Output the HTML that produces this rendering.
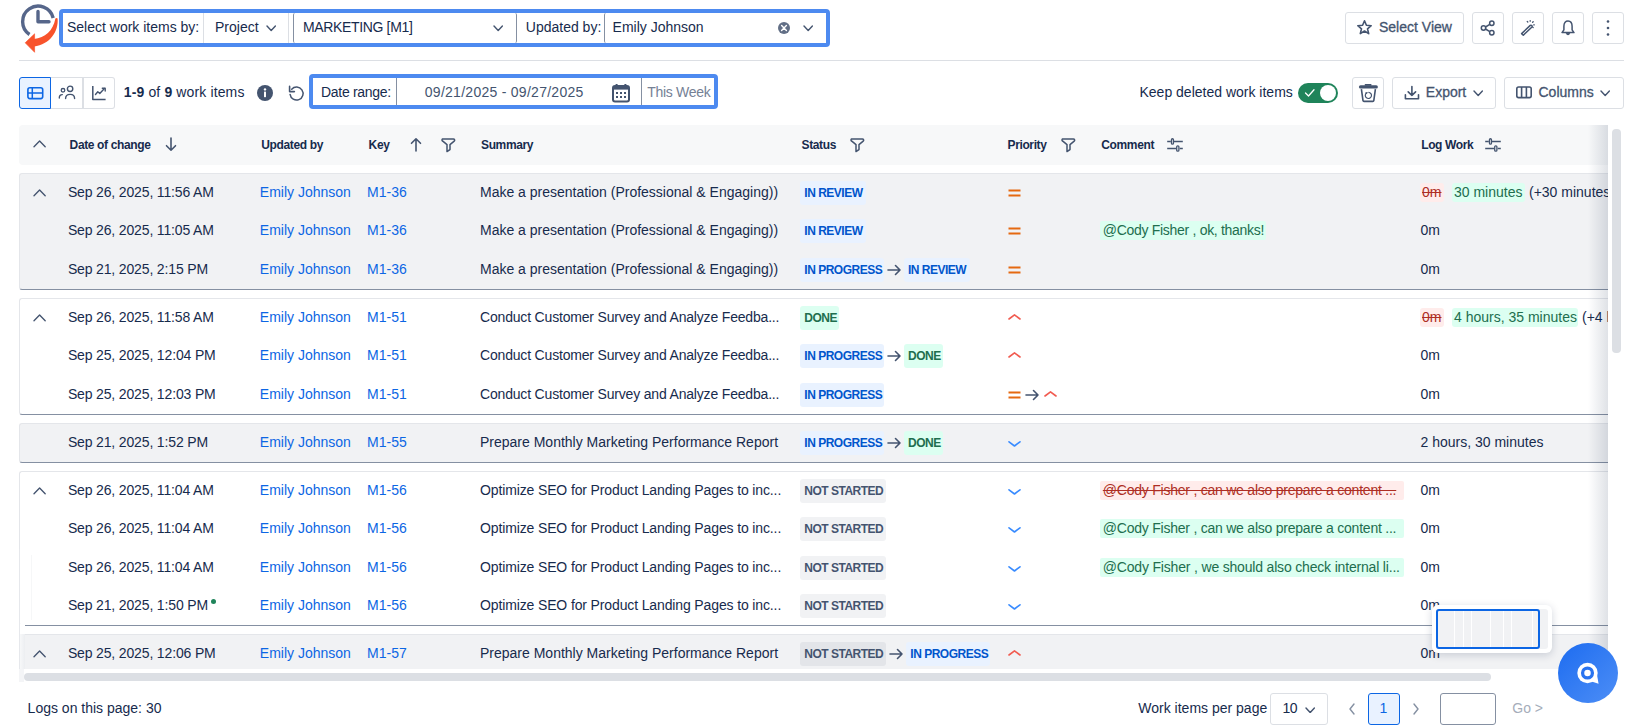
<!DOCTYPE html><html><head><meta charset="utf-8"><style>
html,body{margin:0;padding:0}
body{width:1630px;height:728px;overflow:hidden;background:#fff;font-family:"Liberation Sans",sans-serif;color:#172b4d;position:relative}
.a{position:absolute}
.t{position:absolute;white-space:nowrap}
.loz{position:absolute;height:24px;border-radius:3px;font-size:12px;font-weight:700;line-height:24px;letter-spacing:-0.5px;padding:0 4px;white-space:nowrap}
.lb{background:#e9f2ff;color:#0055cc}
.lg{background:#dcfff1;color:#216e4e}
.ln{background:rgba(9,30,66,0.06);color:#44546f}
</style></head><body>
<svg class="a" style="left:0px;top:0px" width="70" height="56" viewBox="0 0 70 56">
<path d="M29.5 34.5 A15.5 15.5 0 1 1 53.2 18" fill="none" stroke="#56668a" stroke-width="3.4"/>
<path d="M38 11.5 V21.8 H49" fill="none" stroke="#56668a" stroke-width="3.4" stroke-linecap="round" stroke-linejoin="round"/>
<path d="M55.4 18.6 Q56.4 17.6 57.6 18.4 C58.8 31 50 44.5 34 46.4 L34 39 C45 38.2 53 31 55.4 18.6 Z" fill="#f8532c"/>
<path d="M25.2 42.8 L34.6 33.8 L34.6 52.3 Z" fill="#f8532c" stroke="#f8532c" stroke-width="0.6" stroke-linejoin="round"/>
</svg>
<div class="a" style="left:59px;top:9px;width:763px;height:30px;border:4px solid #4d8af0;border-radius:4px;background:#fff"></div>
<div class="t" style="left:67.00px;top:19.15px;font-size:14px;line-height:16px;">Select work items by:</div>
<div class="a" style="left:203px;top:13px;width:84px;height:30px;border:1px solid #dcdfe4;border-top:none;border-bottom:none"></div>
<div class="t" style="left:215.00px;top:19.15px;font-size:14px;line-height:16px;">Project</div>
<svg class="a" style="left:266px;top:25px" width="10.4" height="6.6" viewBox="0 0 10.4 6.6"><path d="M1 1 L5.2 5.6 L9.4 1" fill="none" stroke="#44546f" stroke-width="1.4" stroke-linecap="round" stroke-linejoin="round"/></svg>
<div class="a" style="left:293px;top:13px;width:222px;height:30px;border-left:1.2px solid #8590a2;border-right:1.2px solid #8590a2;border-radius:2px"></div>
<div class="t" style="left:303.00px;top:19.15px;font-size:14px;line-height:16px;letter-spacing:-0.35px">MARKETING [M1]</div>
<svg class="a" style="left:492.5px;top:25px" width="10.4" height="6.6" viewBox="0 0 10.4 6.6"><path d="M1 1 L5.2 5.6 L9.4 1" fill="none" stroke="#44546f" stroke-width="1.4" stroke-linecap="round" stroke-linejoin="round"/></svg>
<div class="t" style="left:525.80px;top:19.15px;font-size:14px;line-height:16px;">Updated by:</div>
<div class="a" style="left:603.5px;top:13px;width:222px;height:30px;border-left:1.2px solid #8590a2;border-radius:2px"></div>
<div class="t" style="left:612.60px;top:19.15px;font-size:14px;line-height:16px;">Emily Johnson</div>
<svg class="a" style="left:777px;top:21px" width="14" height="14" viewBox="0 0 14 14"><circle cx="7" cy="7" r="6" fill="#626f86"/><path d="M4.6 4.6 L9.4 9.4 M9.4 4.6 L4.6 9.4" stroke="#fff" stroke-width="1.4" stroke-linecap="round"/></svg>
<svg class="a" style="left:802.5px;top:25px" width="10.4" height="6.6" viewBox="0 0 10.4 6.6"><path d="M1 1 L5.2 5.6 L9.4 1" fill="none" stroke="#44546f" stroke-width="1.4" stroke-linecap="round" stroke-linejoin="round"/></svg>
<div class="a" style="left:1345px;top:12px;width:117px;height:30px;border:1px solid #dcdfe4;border-radius:3px;background:#fff"></div>
<svg class="a" style="left:1356px;top:19px" width="17" height="17" viewBox="0 0 17 17"><path d="M8.5 1.8 L10.4 6.3 L15.2 6.7 L11.5 9.8 L12.7 14.6 L8.5 12 L4.3 14.6 L5.5 9.8 L1.8 6.7 L6.6 6.3 Z" fill="none" stroke="#44546f" stroke-width="1.6" stroke-linejoin="round"/></svg>
<div class="t" style="left:1379.00px;top:19.15px;font-size:14px;line-height:16px;color:#44546f;-webkit-text-stroke:0.3px #44546f">Select View</div>
<div class="a" style="left:1472px;top:12px;width:30px;height:30px;border:1px solid #dcdfe4;border-radius:3px;background:#fff"></div>
<svg class="a" style="left:1479px;top:19px" width="18" height="18" viewBox="0 0 18 18"><circle cx="4.5" cy="9" r="2.2" fill="none" stroke="#44546f" stroke-width="1.5"/><circle cx="12.8" cy="4.3" r="2.2" fill="none" stroke="#44546f" stroke-width="1.5"/><circle cx="12.8" cy="13.7" r="2.2" fill="none" stroke="#44546f" stroke-width="1.5"/><path d="M6.5 8 L10.8 5.4 M6.5 10 L10.8 12.6" stroke="#44546f" stroke-width="1.5"/></svg>
<div class="a" style="left:1512px;top:12px;width:30px;height:30px;border:1px solid #dcdfe4;border-radius:3px;background:#fff"></div>
<svg class="a" style="left:1519px;top:18px" width="18" height="18" viewBox="0 0 18 18"><path d="M2.6 15.6 L11.3 7.4 A1.2 1.2 0 0 1 13 9 L4.3 17.2 Z" fill="none" stroke="#44546f" stroke-width="1.5" stroke-linejoin="round"/><g stroke="#44546f" stroke-width="1.3" stroke-linecap="round"><path d="M11.2 2.6 V3.2"/><path d="M8.2 3.4 L8.8 4"/><path d="M14.2 3.7 L13.6 4.3"/><path d="M15.3 6.8 H14.7"/><path d="M14.2 9.6 L13.7 9.1"/></g></svg>
<div class="a" style="left:1552px;top:12px;width:30px;height:30px;border:1px solid #dcdfe4;border-radius:3px;background:#fff"></div>
<svg class="a" style="left:1559px;top:18px" width="18" height="18" viewBox="0 0 18 18"><path d="M3 14.6 L4.9 11.9 V8.2 C4.9 4.4 6.8 2.9 9 2.9 C11.2 2.9 13.1 4.4 13.1 8.2 V11.9 L15 14.6 Z" fill="none" stroke="#44546f" stroke-width="1.5" stroke-linejoin="round"/><path d="M7.3 15.4 A1.75 1.75 0 0 0 10.7 15.4 Z" fill="#44546f" stroke="#44546f" stroke-width="1"/></svg>
<div class="a" style="left:1592px;top:12px;width:30px;height:30px;border:1px solid #dcdfe4;border-radius:3px;background:#fff"></div>
<svg class="a" style="left:1601px;top:18px" width="14" height="18" viewBox="0 0 14 18"><circle cx="7" cy="3.5" r="1.3" fill="#44546f"/><circle cx="7" cy="10" r="1.3" fill="#44546f"/><circle cx="7" cy="16.5" r="1.3" fill="#44546f"/></svg>
<div class="a" style="left:19px;top:60px;width:1605px;height:1px;background:#dcdfe4"></div>
<div class="a" style="left:50px;top:77px;width:64px;height:30px;border:1px solid #dcdfe4;border-left:none;border-radius:0 3px 3px 0"></div>
<div class="a" style="left:82.3px;top:78px;width:1.5px;height:30px;background:#dcdfe4"></div>
<div class="a" style="left:19px;top:77px;width:30px;height:30px;border:1px solid #0c66e4;border-radius:3px 0 0 3px;background:#e9f2ff"></div>
<svg class="a" style="left:25px;top:85px" width="20" height="16" viewBox="0 0 20 16"><rect x="2.9" y="2.8" width="14.8" height="10.8" rx="2" fill="none" stroke="#0c66e4" stroke-width="1.6"/><path d="M2.9 8.1 H17.7 M7.3 2.8 V13.6" stroke="#0c66e4" stroke-width="1.5"/></svg>
<svg class="a" style="left:57px;top:84px" width="20" height="17" viewBox="0 0 20 17"><circle cx="6" cy="6.3" r="1.8" fill="none" stroke="#44546f" stroke-width="1.3"/><circle cx="13.1" cy="4.8" r="2.7" fill="none" stroke="#44546f" stroke-width="1.4"/><path d="M2.3 14 C2.3 11.8 3.5 10.6 5.3 10.6" fill="none" stroke="#44546f" stroke-width="1.4" stroke-linecap="round"/><path d="M8.6 14.5 C8.6 11.6 10.4 10.4 13.2 10.4 C16 10.4 17.6 11.6 17.6 14.5" fill="none" stroke="#44546f" stroke-width="1.4" stroke-linecap="round"/></svg>
<svg class="a" style="left:90px;top:84px" width="18" height="17" viewBox="0 0 18 17"><path d="M2.8 2 V15.6 H15.6" fill="none" stroke="#44546f" stroke-width="1.5" stroke-linejoin="round"/><path d="M5.5 10.5 L7.8 7.8 L9.8 9.5 L14.4 4.6" fill="none" stroke="#44546f" stroke-width="1.4" stroke-linecap="round" stroke-linejoin="round"/><path d="M12.3 4.2 H15.2 V7.1" fill="none" stroke="#44546f" stroke-width="1.4" stroke-linecap="round" stroke-linejoin="round"/></svg>
<div class="t" style="left:123.8px;top:84.15px;font-size:14px;line-height:16px;letter-spacing:0.13px"><b>1-9</b> of <b>9</b> work items</div>
<svg class="a" style="left:256px;top:84px" width="18" height="18" viewBox="0 0 18 18"><circle cx="9" cy="9" r="8" fill="#44546f"/><circle cx="9" cy="5.4" r="1.2" fill="#fff"/><rect x="8" y="7.6" width="2" height="5.6" rx="0.6" fill="#fff"/></svg>
<svg class="a" style="left:287.4px;top:84px" width="18" height="18" viewBox="0 0 18 18"><path d="M3.1 10.4 A6.5 6.5 0 1 0 4.7 5.2" fill="none" stroke="#44546f" stroke-width="1.5" stroke-linecap="round"/><path d="M2.6 2.4 V7.6 H7.4" fill="none" stroke="#44546f" stroke-width="1.6" stroke-linecap="round" stroke-linejoin="round"/></svg>
<div class="a" style="left:309px;top:74px;width:401px;height:27px;border:4px solid #4d8af0;border-radius:4px;background:#fff"></div>
<div class="t" style="left:321.00px;top:84.15px;font-size:14px;line-height:16px;letter-spacing:-0.3px">Date range:</div>
<div class="a" style="left:395.5px;top:78px;width:1px;height:27px;background:#8590a2"></div>
<div class="t" style="left:424.80px;top:84.15px;font-size:14px;line-height:16px;color:#44546f;letter-spacing:0.27px">09/21/2025 - 09/27/2025</div>
<svg class="a" style="left:611px;top:83px" width="20" height="20" viewBox="0 0 20 20"><rect x="2" y="3" width="16" height="15.5" rx="2" fill="none" stroke="#44546f" stroke-width="2"/><rect x="2" y="3" width="16" height="3.6" fill="#44546f"/><path d="M5.6 1 V4 M14.4 1 V4" stroke="#44546f" stroke-width="2"/><g fill="#44546f"><rect x="5" y="9" width="2" height="2"/><rect x="9" y="9" width="2" height="2"/><rect x="13" y="9" width="2" height="2"/><rect x="5" y="13" width="2" height="2"/><rect x="9" y="13" width="2" height="2"/><rect x="13" y="13" width="2" height="2"/></g></svg>
<div class="a" style="left:641px;top:78px;width:1px;height:27px;background:#8590a2"></div>
<div class="t" style="left:647.20px;top:84.15px;font-size:14px;line-height:16px;color:#758195;letter-spacing:-0.3px">This Week</div>
<div class="t" style="left:1139.50px;top:84.15px;font-size:14px;line-height:16px;">Keep deleted work items</div>
<div class="a" style="left:1298px;top:83px;width:40px;height:20px;background:#1f845a;border-radius:10px"></div>
<div class="a" style="left:1320px;top:85px;width:16px;height:16px;background:#fff;border-radius:50%"></div>
<svg class="a" style="left:1303.5px;top:88px" width="12" height="10" viewBox="0 0 12 10"><path d="M1.5 5 L4.5 8 L10 1.8" fill="none" stroke="#fff" stroke-width="1.3" stroke-linecap="round" stroke-linejoin="round"/></svg>
<div class="a" style="left:1352px;top:77px;width:30px;height:30px;border:1px solid #dcdfe4;border-radius:3px;background:#fff"></div>
<svg class="a" style="left:1358px;top:83px" width="20" height="20" viewBox="0 0 20 20"><path d="M2.6 3.9 H18.2" stroke="#44546f" stroke-width="3.4" stroke-linecap="round"/><path d="M7.4 1.9 H12.8" stroke="#44546f" stroke-width="1.6" stroke-linecap="round"/><path d="M3.4 6.2 L5 17.6 A1 1 0 0 0 6 18.4 H14.8 A1 1 0 0 0 15.8 17.6 L17.4 6.2" fill="none" stroke="#44546f" stroke-width="1.6" stroke-linejoin="round"/><path d="M8.7 9.8 A3.1 3.1 0 1 0 10.4 9.3" fill="none" stroke="#44546f" stroke-width="1.2"/><path d="M7.2 9.2 L8.7 11.3 L10 9.2 Z" fill="#44546f"/></svg>
<div class="a" style="left:1392px;top:77px;width:102px;height:30px;border:1px solid #dcdfe4;border-radius:3px;background:#fff"></div>
<svg class="a" style="left:1403px;top:85px" width="18" height="16" viewBox="0 0 18 16"><path d="M8.9 1.5 V10.4 M5.2 6.9 L8.9 10.4 L12.6 6.9" fill="none" stroke="#44546f" stroke-width="1.6" stroke-linecap="round" stroke-linejoin="round"/><path d="M2.4 9.8 V13.8 H15.5 V9.8" fill="none" stroke="#44546f" stroke-width="1.6" stroke-linecap="round" stroke-linejoin="round"/></svg>
<div class="t" style="left:1425.80px;top:84.15px;font-size:14px;line-height:16px;color:#44546f;-webkit-text-stroke:0.3px #44546f">Export</div>
<svg class="a" style="left:1473px;top:90px" width="10.4" height="6.6" viewBox="0 0 10.4 6.6"><path d="M1 1 L5.2 5.6 L9.4 1" fill="none" stroke="#44546f" stroke-width="1.4" stroke-linecap="round" stroke-linejoin="round"/></svg>
<div class="a" style="left:1504px;top:77px;width:118px;height:30px;border:1px solid #dcdfe4;border-radius:3px;background:#fff"></div>
<svg class="a" style="left:1515px;top:85px" width="18" height="16" viewBox="0 0 18 16"><rect x="1.8" y="2" width="14.4" height="10.6" rx="1.8" fill="none" stroke="#44546f" stroke-width="1.6"/><path d="M6.6 2 V12.6 M11.4 2 V12.6" stroke="#44546f" stroke-width="1.6"/></svg>
<div class="t" style="left:1538.50px;top:84.15px;font-size:14px;line-height:16px;color:#44546f;-webkit-text-stroke:0.3px #44546f">Columns</div>
<svg class="a" style="left:1600px;top:90px" width="10.4" height="6.6" viewBox="0 0 10.4 6.6"><path d="M1 1 L5.2 5.6 L9.4 1" fill="none" stroke="#44546f" stroke-width="1.4" stroke-linecap="round" stroke-linejoin="round"/></svg>
<div class="a" style="left:19px;top:125px;width:1589px;height:544px;overflow:hidden">
<div class="a" style="left:0px;top:0px;width:1600px;height:40px;background:#f7f8f9;border-radius:4px 0 0 4px"></div>
<svg class="a" style="left:14.399999999999999px;top:15.400000000000006px" width="13.2" height="7.8" viewBox="0 0 13.2 7.8"><path d="M1 6.8 L6.6 1 L12.2 6.8" fill="none" stroke="#44546f" stroke-width="1.35" stroke-linecap="round" stroke-linejoin="round"/></svg>
<div class="t" style="left:50.60px;top:13.14px;font-size:12px;line-height:14px;font-weight:700;letter-spacing:-0.37px">Date of change</div>
<svg class="a" style="left:146px;top:12.300000000000011px" width="12" height="15" viewBox="0 0 12 15"><path d="M6 1 V13.2 M1.5 8.7 L6 13.2 L10.5 8.7" fill="none" stroke="#44546f" stroke-width="1.6" stroke-linecap="round" stroke-linejoin="round"/></svg>
<div class="t" style="left:242.30px;top:13.14px;font-size:12px;line-height:14px;font-weight:700;letter-spacing:-0.37px">Updated by</div>
<div class="t" style="left:349.60px;top:13.14px;font-size:12px;line-height:14px;font-weight:700;letter-spacing:-0.37px">Key</div>
<svg class="a" style="left:391px;top:12.300000000000011px" width="12" height="15" viewBox="0 0 12 15"><path d="M6 14 V1.8 M1.5 6.3 L6 1.8 L10.5 6.3" fill="none" stroke="#44546f" stroke-width="1.6" stroke-linecap="round" stroke-linejoin="round"/></svg>
<svg class="a" style="left:421.0px;top:12.0px" width="16" height="16" viewBox="0 0 16 16"><path d="M2.6 1.9 H13.4 A1.3 1.3 0 0 1 14.2 4.2 L10 7.6 V12.6 L7 14.5 V7.6 L2.8 4.2 A1.3 1.3 0 0 1 2.6 1.9 Z" fill="none" stroke="#44546f" stroke-width="1.5" stroke-linejoin="round"/></svg>
<div class="t" style="left:462.00px;top:13.14px;font-size:12px;line-height:14px;font-weight:700;letter-spacing:-0.37px">Summary</div>
<div class="t" style="left:782.50px;top:13.14px;font-size:12px;line-height:14px;font-weight:700;letter-spacing:-0.37px">Status</div>
<svg class="a" style="left:830.0px;top:12.0px" width="16" height="16" viewBox="0 0 16 16"><path d="M2.6 1.9 H13.4 A1.3 1.3 0 0 1 14.2 4.2 L10 7.6 V12.6 L7 14.5 V7.6 L2.8 4.2 A1.3 1.3 0 0 1 2.6 1.9 Z" fill="none" stroke="#44546f" stroke-width="1.5" stroke-linejoin="round"/></svg>
<div class="t" style="left:988.50px;top:13.14px;font-size:12px;line-height:14px;font-weight:700;letter-spacing:-0.37px">Priority</div>
<svg class="a" style="left:1041.0px;top:12.0px" width="16" height="16" viewBox="0 0 16 16"><path d="M2.6 1.9 H13.4 A1.3 1.3 0 0 1 14.2 4.2 L10 7.6 V12.6 L7 14.5 V7.6 L2.8 4.2 A1.3 1.3 0 0 1 2.6 1.9 Z" fill="none" stroke="#44546f" stroke-width="1.5" stroke-linejoin="round"/></svg>
<div class="t" style="left:1082.30px;top:13.14px;font-size:12px;line-height:14px;font-weight:700;letter-spacing:-0.37px">Comment</div>
<svg class="a" style="left:1148px;top:12px" width="17" height="16" viewBox="0 0 17 16"><path d="M0.2 4.5 H3.8 M7 4.5 H15.8 M0.2 11.4 H9 M12.7 11.4 H15.8" stroke="#44546f" stroke-width="1.5"/><rect x="4.45" y="1.75" width="2" height="5.4" rx="1" fill="none" stroke="#44546f" stroke-width="1.3"/><rect x="9.7" y="8.8" width="2.2" height="5.4" rx="1" fill="none" stroke="#44546f" stroke-width="1.3"/></svg>
<div class="t" style="left:1402.20px;top:13.14px;font-size:12px;line-height:14px;font-weight:700;letter-spacing:-0.37px">Log Work</div>
<svg class="a" style="left:1466px;top:12px" width="17" height="16" viewBox="0 0 17 16"><path d="M0.2 4.5 H3.8 M7 4.5 H15.8 M0.2 11.4 H9 M12.7 11.4 H15.8" stroke="#44546f" stroke-width="1.5"/><rect x="4.45" y="1.75" width="2" height="5.4" rx="1" fill="none" stroke="#44546f" stroke-width="1.3"/><rect x="9.7" y="8.8" width="2.2" height="5.4" rx="1" fill="none" stroke="#44546f" stroke-width="1.3"/></svg>
<div class="a" style="left:0px;top:48px;width:1600px;height:115px;background:#f1f2f4;border-top:1px solid #e4e6ea;border-left:1px solid #e4e6ea;border-radius:3px 0 0 3px;border-bottom:1px solid #8590a2"></div>
<svg class="a" style="left:14.399999999999999px;top:64.1px" width="13.2" height="7.8" viewBox="0 0 13.2 7.8"><path d="M1 6.8 L6.6 1 L12.2 6.8" fill="none" stroke="#44546f" stroke-width="1.35" stroke-linecap="round" stroke-linejoin="round"/></svg>
<div class="t" style="left:48.90px;top:59.15px;font-size:14px;line-height:16px;letter-spacing:-0.15px">Sep 26, 2025, 11:56 AM</div>
<div class="t" style="left:240.80px;top:59.15px;font-size:14px;line-height:16px;color:#0c66e4;">Emily Johnson</div>
<div class="t" style="left:348.10px;top:59.15px;font-size:14px;line-height:16px;color:#0c66e4;">M1-36</div>
<div class="t" style="left:461.00px;top:59.15px;font-size:14px;line-height:16px;">Make a presentation (Professional &amp; Engaging))</div>
<div class="loz lb" style="left:781.30px;top:56.00px;width:57.5px;text-align:center">IN REVIEW</div>
<svg class="a" style="left:988.5px;top:64.0px" width="13" height="8" viewBox="0 0 13 8"><path d="M0.5 1.5 H12.5 M0.5 6.5 H12.5" stroke="#e56910" stroke-width="1.8"/></svg>
<div class="a" style="left:1401px;top:58.0px;width:24px;height:19px;background:#ffeceb;border-radius:3px"></div>
<div class="t" style="left:1403.00px;top:59.15px;font-size:14px;line-height:16px;color:#ae2e24;text-decoration:line-through">0m</div>
<div class="a" style="left:1433px;top:58.0px;width:73px;height:19px;background:#dcfff1;border-radius:3px"></div>
<div class="t" style="left:1435.00px;top:59.15px;font-size:14px;line-height:16px;color:#216e4e;">30 minutes</div>
<div class="t" style="left:1510.00px;top:59.15px;font-size:14px;line-height:16px;">(+30 minutes)</div>
<div class="t" style="left:48.90px;top:97.48px;font-size:14px;line-height:16px;letter-spacing:-0.15px">Sep 26, 2025, 11:05 AM</div>
<div class="t" style="left:240.80px;top:97.48px;font-size:14px;line-height:16px;color:#0c66e4;">Emily Johnson</div>
<div class="t" style="left:348.10px;top:97.48px;font-size:14px;line-height:16px;color:#0c66e4;">M1-36</div>
<div class="t" style="left:461.00px;top:97.48px;font-size:14px;line-height:16px;">Make a presentation (Professional &amp; Engaging))</div>
<div class="loz lb" style="left:781.30px;top:94.33px;width:57.5px;text-align:center">IN REVIEW</div>
<svg class="a" style="left:988.5px;top:102.33333333333334px" width="13" height="8" viewBox="0 0 13 8"><path d="M0.5 1.5 H12.5 M0.5 6.5 H12.5" stroke="#e56910" stroke-width="1.8"/></svg>
<div class="a" style="left:1081.3px;top:96.33333333333334px;width:165.5px;height:19px;background:#dcfff1;border-radius:2px"></div>
<div class="t" style="left:1083.80px;top:97.48px;font-size:14px;line-height:16px;color:#216e4e;letter-spacing:-0.3px">@Cody Fisher , ok, thanks!</div>
<div class="t" style="left:1401.50px;top:97.48px;font-size:14px;line-height:16px;">0m</div>
<div class="t" style="left:48.90px;top:135.82px;font-size:14px;line-height:16px;letter-spacing:-0.15px">Sep 21, 2025, 2:15 PM</div>
<div class="t" style="left:240.80px;top:135.82px;font-size:14px;line-height:16px;color:#0c66e4;">Emily Johnson</div>
<div class="t" style="left:348.10px;top:135.82px;font-size:14px;line-height:16px;color:#0c66e4;">M1-36</div>
<div class="t" style="left:461.00px;top:135.82px;font-size:14px;line-height:16px;">Make a presentation (Professional &amp; Engaging))</div>
<div class="loz lb" style="left:781.30px;top:132.67px;width:75.7px;text-align:center">IN PROGRESS</div>
<svg class="a" style="left:868.0px;top:138.66666666666669px" width="15" height="12" viewBox="0 0 15 12"><path d="M1 6 H13 M8.5 1.5 L13 6 L8.5 10.5" fill="none" stroke="#44546f" stroke-width="1.6" stroke-linecap="round" stroke-linejoin="round"/></svg>
<div class="loz lb" style="left:885.00px;top:132.67px;width:57.5px;text-align:center">IN REVIEW</div>
<svg class="a" style="left:988.5px;top:140.66666666666669px" width="13" height="8" viewBox="0 0 13 8"><path d="M0.5 1.5 H12.5 M0.5 6.5 H12.5" stroke="#e56910" stroke-width="1.8"/></svg>
<div class="t" style="left:1401.50px;top:135.82px;font-size:14px;line-height:16px;">0m</div>
<div class="a" style="left:0px;top:173px;width:1600px;height:115px;background:#fff;border-top:1px solid #e4e6ea;border-left:1px solid #e4e6ea;border-radius:3px 0 0 3px;border-bottom:1px solid #8590a2"></div>
<svg class="a" style="left:14.399999999999999px;top:189.10000000000002px" width="13.2" height="7.8" viewBox="0 0 13.2 7.8"><path d="M1 6.8 L6.6 1 L12.2 6.8" fill="none" stroke="#44546f" stroke-width="1.35" stroke-linecap="round" stroke-linejoin="round"/></svg>
<div class="t" style="left:48.90px;top:184.15px;font-size:14px;line-height:16px;letter-spacing:-0.15px">Sep 26, 2025, 11:58 AM</div>
<div class="t" style="left:240.80px;top:184.15px;font-size:14px;line-height:16px;color:#0c66e4;">Emily Johnson</div>
<div class="t" style="left:348.10px;top:184.15px;font-size:14px;line-height:16px;color:#0c66e4;">M1-51</div>
<div class="t" style="left:461.00px;top:184.15px;font-size:14px;line-height:16px;letter-spacing:-0.18px">Conduct Customer Survey and Analyze Feedba...</div>
<div class="loz lg" style="left:781.30px;top:181.00px;width:31px;text-align:center">DONE</div>
<svg class="a" style="left:988.5px;top:188.0px" width="13" height="8" viewBox="0 0 13 8"><path d="M1 6 L6.5 1.8 L12 6" fill="none" stroke="#f15b50" stroke-width="1.6" stroke-linecap="round" stroke-linejoin="round"/></svg>
<div class="a" style="left:1401px;top:183.0px;width:24px;height:19px;background:#ffeceb;border-radius:3px"></div>
<div class="t" style="left:1403.00px;top:184.15px;font-size:14px;line-height:16px;color:#ae2e24;text-decoration:line-through">0m</div>
<div class="a" style="left:1433px;top:183.0px;width:126px;height:19px;background:#dcfff1;border-radius:3px"></div>
<div class="t" style="left:1435.00px;top:184.15px;font-size:14px;line-height:16px;color:#216e4e;">4 hours, 35 minutes</div>
<div class="t" style="left:1563.00px;top:184.15px;font-size:14px;line-height:16px;">(+4 hours, 35 minutes)</div>
<div class="t" style="left:48.90px;top:222.48px;font-size:14px;line-height:16px;letter-spacing:-0.15px">Sep 25, 2025, 12:04 PM</div>
<div class="t" style="left:240.80px;top:222.48px;font-size:14px;line-height:16px;color:#0c66e4;">Emily Johnson</div>
<div class="t" style="left:348.10px;top:222.48px;font-size:14px;line-height:16px;color:#0c66e4;">M1-51</div>
<div class="t" style="left:461.00px;top:222.48px;font-size:14px;line-height:16px;letter-spacing:-0.18px">Conduct Customer Survey and Analyze Feedba...</div>
<div class="loz lb" style="left:781.30px;top:219.33px;width:75.7px;text-align:center">IN PROGRESS</div>
<svg class="a" style="left:868.0px;top:225.33333333333331px" width="15" height="12" viewBox="0 0 15 12"><path d="M1 6 H13 M8.5 1.5 L13 6 L8.5 10.5" fill="none" stroke="#44546f" stroke-width="1.6" stroke-linecap="round" stroke-linejoin="round"/></svg>
<div class="loz lg" style="left:885.00px;top:219.33px;width:31px;text-align:center">DONE</div>
<svg class="a" style="left:988.5px;top:226.33333333333331px" width="13" height="8" viewBox="0 0 13 8"><path d="M1 6 L6.5 1.8 L12 6" fill="none" stroke="#f15b50" stroke-width="1.6" stroke-linecap="round" stroke-linejoin="round"/></svg>
<div class="t" style="left:1401.50px;top:222.48px;font-size:14px;line-height:16px;">0m</div>
<div class="t" style="left:48.90px;top:260.82px;font-size:14px;line-height:16px;letter-spacing:-0.15px">Sep 25, 2025, 12:03 PM</div>
<div class="t" style="left:240.80px;top:260.82px;font-size:14px;line-height:16px;color:#0c66e4;">Emily Johnson</div>
<div class="t" style="left:348.10px;top:260.82px;font-size:14px;line-height:16px;color:#0c66e4;">M1-51</div>
<div class="t" style="left:461.00px;top:260.82px;font-size:14px;line-height:16px;letter-spacing:-0.18px">Conduct Customer Survey and Analyze Feedba...</div>
<div class="loz lb" style="left:781.30px;top:257.67px;width:75.7px;text-align:center">IN PROGRESS</div>
<svg class="a" style="left:988.5px;top:265.6666666666667px" width="13" height="8" viewBox="0 0 13 8"><path d="M0.5 1.5 H12.5 M0.5 6.5 H12.5" stroke="#e56910" stroke-width="1.8"/></svg>
<svg class="a" style="left:1005.5px;top:263.6666666666667px" width="15" height="12" viewBox="0 0 15 12"><path d="M1 6 H13 M8.5 1.5 L13 6 L8.5 10.5" fill="none" stroke="#44546f" stroke-width="1.6" stroke-linecap="round" stroke-linejoin="round"/></svg>
<svg class="a" style="left:1024.5px;top:264.6666666666667px" width="13" height="8" viewBox="0 0 13 8"><path d="M1 6 L6.5 1.8 L12 6" fill="none" stroke="#f15b50" stroke-width="1.6" stroke-linecap="round" stroke-linejoin="round"/></svg>
<div class="t" style="left:1401.50px;top:260.82px;font-size:14px;line-height:16px;">0m</div>
<div class="a" style="left:0px;top:298px;width:1600px;height:38px;background:#f1f2f4;border-top:1px solid #e4e6ea;border-left:1px solid #e4e6ea;border-radius:3px 0 0 3px;border-bottom:1px solid #8590a2"></div>
<div class="t" style="left:48.90px;top:309.15px;font-size:14px;line-height:16px;letter-spacing:-0.15px">Sep 21, 2025, 1:52 PM</div>
<div class="t" style="left:240.80px;top:309.15px;font-size:14px;line-height:16px;color:#0c66e4;">Emily Johnson</div>
<div class="t" style="left:348.10px;top:309.15px;font-size:14px;line-height:16px;color:#0c66e4;">M1-55</div>
<div class="t" style="left:461.00px;top:309.15px;font-size:14px;line-height:16px;">Prepare Monthly Marketing Performance Report</div>
<div class="loz lb" style="left:781.30px;top:306.00px;width:75.7px;text-align:center">IN PROGRESS</div>
<svg class="a" style="left:868.0px;top:312px" width="15" height="12" viewBox="0 0 15 12"><path d="M1 6 H13 M8.5 1.5 L13 6 L8.5 10.5" fill="none" stroke="#44546f" stroke-width="1.6" stroke-linecap="round" stroke-linejoin="round"/></svg>
<div class="loz lg" style="left:885.00px;top:306.00px;width:31px;text-align:center">DONE</div>
<svg class="a" style="left:988.5px;top:315px" width="13" height="8" viewBox="0 0 13 8"><path d="M1 1.8 L6.5 6 L12 1.8" fill="none" stroke="#388bff" stroke-width="1.6" stroke-linecap="round" stroke-linejoin="round"/></svg>
<div class="t" style="left:1401.50px;top:309.15px;font-size:14px;line-height:16px;">2 hours, 30 minutes</div>
<div class="a" style="left:0px;top:346px;width:1600px;height:153px;background:#fff;border-top:1px solid #e4e6ea;border-left:1px solid #e4e6ea;border-radius:3px 0 0 3px;border-bottom:1px solid #8590a2"></div>
<svg class="a" style="left:14.399999999999999px;top:362.1px" width="13.2" height="7.8" viewBox="0 0 13.2 7.8"><path d="M1 6.8 L6.6 1 L12.2 6.8" fill="none" stroke="#44546f" stroke-width="1.35" stroke-linecap="round" stroke-linejoin="round"/></svg>
<div class="t" style="left:48.90px;top:357.15px;font-size:14px;line-height:16px;letter-spacing:-0.15px">Sep 26, 2025, 11:04 AM</div>
<div class="t" style="left:240.80px;top:357.15px;font-size:14px;line-height:16px;color:#0c66e4;">Emily Johnson</div>
<div class="t" style="left:348.10px;top:357.15px;font-size:14px;line-height:16px;color:#0c66e4;">M1-56</div>
<div class="t" style="left:461.00px;top:357.15px;font-size:14px;line-height:16px;letter-spacing:-0.13px">Optimize SEO for Product Landing Pages to inc...</div>
<div class="loz ln" style="left:781.30px;top:354.00px;width:78px;text-align:center">NOT STARTED</div>
<svg class="a" style="left:988.5px;top:363.0px" width="13" height="8" viewBox="0 0 13 8"><path d="M1 1.8 L6.5 6 L12 1.8" fill="none" stroke="#388bff" stroke-width="1.6" stroke-linecap="round" stroke-linejoin="round"/></svg>
<div class="a" style="left:1081.3px;top:356.0px;width:303.7px;height:19px;background:#ffeceb;border-radius:2px"></div>
<div class="t" style="left:1083.80px;top:357.15px;font-size:14px;line-height:16px;color:#ae2e24;text-decoration:line-through;letter-spacing:-0.23px">@Cody Fisher , can we also prepare a content ...</div>
<div class="t" style="left:1401.50px;top:357.15px;font-size:14px;line-height:16px;">0m</div>
<div class="t" style="left:48.90px;top:395.40px;font-size:14px;line-height:16px;letter-spacing:-0.15px">Sep 26, 2025, 11:04 AM</div>
<div class="t" style="left:240.80px;top:395.40px;font-size:14px;line-height:16px;color:#0c66e4;">Emily Johnson</div>
<div class="t" style="left:348.10px;top:395.40px;font-size:14px;line-height:16px;color:#0c66e4;">M1-56</div>
<div class="t" style="left:461.00px;top:395.40px;font-size:14px;line-height:16px;letter-spacing:-0.13px">Optimize SEO for Product Landing Pages to inc...</div>
<div class="loz ln" style="left:781.30px;top:392.25px;width:78px;text-align:center">NOT STARTED</div>
<svg class="a" style="left:988.5px;top:401.25px" width="13" height="8" viewBox="0 0 13 8"><path d="M1 1.8 L6.5 6 L12 1.8" fill="none" stroke="#388bff" stroke-width="1.6" stroke-linecap="round" stroke-linejoin="round"/></svg>
<div class="a" style="left:1081.3px;top:394.25px;width:303.7px;height:19px;background:#dcfff1;border-radius:2px"></div>
<div class="t" style="left:1083.80px;top:395.40px;font-size:14px;line-height:16px;color:#216e4e;letter-spacing:-0.23px">@Cody Fisher , can we also prepare a content ...</div>
<div class="t" style="left:1401.50px;top:395.40px;font-size:14px;line-height:16px;">0m</div>
<div class="t" style="left:48.90px;top:433.65px;font-size:14px;line-height:16px;letter-spacing:-0.15px">Sep 26, 2025, 11:04 AM</div>
<div class="t" style="left:240.80px;top:433.65px;font-size:14px;line-height:16px;color:#0c66e4;">Emily Johnson</div>
<div class="t" style="left:348.10px;top:433.65px;font-size:14px;line-height:16px;color:#0c66e4;">M1-56</div>
<div class="t" style="left:461.00px;top:433.65px;font-size:14px;line-height:16px;letter-spacing:-0.13px">Optimize SEO for Product Landing Pages to inc...</div>
<div class="loz ln" style="left:781.30px;top:430.50px;width:78px;text-align:center">NOT STARTED</div>
<svg class="a" style="left:988.5px;top:439.5px" width="13" height="8" viewBox="0 0 13 8"><path d="M1 1.8 L6.5 6 L12 1.8" fill="none" stroke="#388bff" stroke-width="1.6" stroke-linecap="round" stroke-linejoin="round"/></svg>
<div class="a" style="left:1081.3px;top:432.5px;width:303.7px;height:19px;background:#dcfff1;border-radius:2px"></div>
<div class="t" style="left:1083.80px;top:433.65px;font-size:14px;line-height:16px;color:#216e4e;letter-spacing:-0.18px">@Cody Fisher , we should also check internal li...</div>
<div class="t" style="left:1401.50px;top:433.65px;font-size:14px;line-height:16px;">0m</div>
<div class="t" style="left:48.90px;top:471.90px;font-size:14px;line-height:16px;letter-spacing:-0.15px">Sep 21, 2025, 1:50 PM</div>
<div class="a" style="left:191.5px;top:473.5px;width:5px;height:5px;background:#1f845a;border-radius:50%"></div>
<div class="t" style="left:240.80px;top:471.90px;font-size:14px;line-height:16px;color:#0c66e4;">Emily Johnson</div>
<div class="t" style="left:348.10px;top:471.90px;font-size:14px;line-height:16px;color:#0c66e4;">M1-56</div>
<div class="t" style="left:461.00px;top:471.90px;font-size:14px;line-height:16px;letter-spacing:-0.13px">Optimize SEO for Product Landing Pages to inc...</div>
<div class="loz ln" style="left:781.30px;top:468.75px;width:78px;text-align:center">NOT STARTED</div>
<svg class="a" style="left:988.5px;top:477.75px" width="13" height="8" viewBox="0 0 13 8"><path d="M1 1.8 L6.5 6 L12 1.8" fill="none" stroke="#388bff" stroke-width="1.6" stroke-linecap="round" stroke-linejoin="round"/></svg>
<div class="t" style="left:1401.50px;top:471.90px;font-size:14px;line-height:16px;">0m</div>
<div class="a" style="left:0px;top:509px;width:1600px;height:38px;background:#f1f2f4;border-top:1px solid #e4e6ea;border-left:1px solid #e4e6ea;border-radius:3px 0 0 3px;border-bottom:1px solid #8590a2"></div>
<svg class="a" style="left:14.399999999999999px;top:525.1px" width="13.2" height="7.8" viewBox="0 0 13.2 7.8"><path d="M1 6.8 L6.6 1 L12.2 6.8" fill="none" stroke="#44546f" stroke-width="1.35" stroke-linecap="round" stroke-linejoin="round"/></svg>
<div class="t" style="left:48.90px;top:520.15px;font-size:14px;line-height:16px;letter-spacing:-0.15px">Sep 25, 2025, 12:06 PM</div>
<div class="t" style="left:240.80px;top:520.15px;font-size:14px;line-height:16px;color:#0c66e4;">Emily Johnson</div>
<div class="t" style="left:348.10px;top:520.15px;font-size:14px;line-height:16px;color:#0c66e4;">M1-57</div>
<div class="t" style="left:461.00px;top:520.15px;font-size:14px;line-height:16px;">Prepare Monthly Marketing Performance Report</div>
<div class="loz ln" style="left:781.30px;top:517.00px;width:78px;text-align:center">NOT STARTED</div>
<svg class="a" style="left:870.3px;top:523px" width="15" height="12" viewBox="0 0 15 12"><path d="M1 6 H13 M8.5 1.5 L13 6 L8.5 10.5" fill="none" stroke="#44546f" stroke-width="1.6" stroke-linecap="round" stroke-linejoin="round"/></svg>
<div class="loz lb" style="left:887.30px;top:517.00px;width:75.7px;text-align:center">IN PROGRESS</div>
<svg class="a" style="left:988.5px;top:524px" width="13" height="8" viewBox="0 0 13 8"><path d="M1 6 L6.5 1.8 L12 6" fill="none" stroke="#f15b50" stroke-width="1.6" stroke-linecap="round" stroke-linejoin="round"/></svg>
<div class="t" style="left:1401.50px;top:520.15px;font-size:14px;line-height:16px;">0m</div>
<div class="a" style="left:0px;top:424px;width:1px;height:120px;background:#e6e8ec"></div>
<div class="a" style="left:11.5px;top:430px;width:1px;height:65px;background:#f6f7f8"></div>
<div class="a" style="left:0.5px;top:499px;width:5.5px;height:2px;background:#fff"></div>
<div class="a" style="left:1px;top:509px;width:5px;height:35px;background:linear-gradient(to right,#f7f8f9,#eceef1)"></div>
<div class="a" style="left:1569px;top:0px;width:20px;height:544px;background:linear-gradient(to right, rgba(9,30,66,0), rgba(9,30,66,0.13))"></div>
</div>
<div class="a" style="left:1612px;top:128.5px;width:8.5px;height:224px;background:#dcdfe4;border-radius:4px"></div>
<div class="a" style="left:19px;top:669px;width:5px;height:13px;background:#f4f5f7"></div>
<div class="a" style="left:23.5px;top:673px;width:1467.5px;height:8px;background:#dcdfe4;border-radius:4px"></div>
<div class="t" style="left:27.60px;top:699.65px;font-size:14px;line-height:16px;">Logs on this page: 30</div>
<div class="t" style="left:1138.30px;top:699.65px;font-size:14px;line-height:16px;">Work items per page</div>
<div class="a" style="left:1270px;top:693px;width:56px;height:30px;border:1px solid #dcdfe4;border-radius:3px;background:#fff"></div>
<div class="t" style="left:1282.40px;top:699.65px;font-size:14px;line-height:16px;letter-spacing:-0.5px">10</div>
<svg class="a" style="left:1304.5px;top:706.5px" width="10.4" height="6.6" viewBox="0 0 10.4 6.6"><path d="M1 1 L5.2 5.6 L9.4 1" fill="none" stroke="#44546f" stroke-width="1.4" stroke-linecap="round" stroke-linejoin="round"/></svg>
<svg class="a" style="left:1347px;top:702px" width="10" height="14" viewBox="0 0 10 14"><path d="M7 2 L3 7 L7 12" fill="none" stroke="#8590a2" stroke-width="1.4" stroke-linecap="round" stroke-linejoin="round"/></svg>
<div class="a" style="left:1368px;top:693px;width:30px;height:30px;border:1px solid #0c66e4;border-radius:3px;background:#e9f2ff"></div>
<div class="t" style="left:1379.50px;top:699.65px;font-size:14px;line-height:16px;color:#0c66e4;">1</div>
<svg class="a" style="left:1411px;top:702px" width="10" height="14" viewBox="0 0 10 14"><path d="M3 2 L7 7 L3 12" fill="none" stroke="#8590a2" stroke-width="1.4" stroke-linecap="round" stroke-linejoin="round"/></svg>
<div class="a" style="left:1440px;top:693px;width:54px;height:30px;border:1px solid #8590a2;border-radius:3px;background:#fff"></div>
<div class="t" style="left:1512.30px;top:699.65px;font-size:14px;line-height:16px;color:#a5adba;">Go &gt;</div>
<div class="a" style="left:1432px;top:605px;width:119.5px;height:47.5px;background:#fff;border-radius:6px;box-shadow:0 2px 8px rgba(9,30,66,0.18)"></div>
<div class="a" style="left:1436px;top:609px;width:112px;height:39.5px;background:#f1f2f4;border-radius:3px"></div>
<div class="a" style="left:1436px;top:609px;width:99.5px;height:35.5px;border:2px solid #0c66e4;border-radius:3px;background:#f1f2f4;overflow:hidden"><div class="a" style="left:16px;top:0;width:1px;height:39.5px;background:#fff"></div><div class="a" style="left:24.5px;top:0;width:1px;height:39.5px;background:#fff"></div><div class="a" style="left:32.5px;top:0;width:1px;height:39.5px;background:#fff"></div><div class="a" style="left:51.5px;top:0;width:1px;height:39.5px;background:#fff"></div><div class="a" style="left:65px;top:0;width:1px;height:39.5px;background:#fff"></div><div class="a" style="left:73px;top:0;width:1px;height:39.5px;background:#fff"></div><div class="a" style="left:93.5px;top:0;width:1px;height:39.5px;background:#fff"></div></div>
<div class="a" style="left:1558px;top:643px;width:60px;height:60px;border-radius:50%;background:linear-gradient(135deg,#1d6cf0,#4d8ef6)"></div>
<svg class="a" style="left:1574px;top:659px" width="28" height="28" viewBox="0 0 28 28"><circle cx="13.5" cy="14" r="10.2" fill="#fff"/><path d="M16 22 L24.6 24.8 L23 16 Z" fill="#fff"/><circle cx="13.5" cy="14" r="4.9" fill="none" stroke="#2a74f0" stroke-width="3.3"/></svg>
</body></html>
